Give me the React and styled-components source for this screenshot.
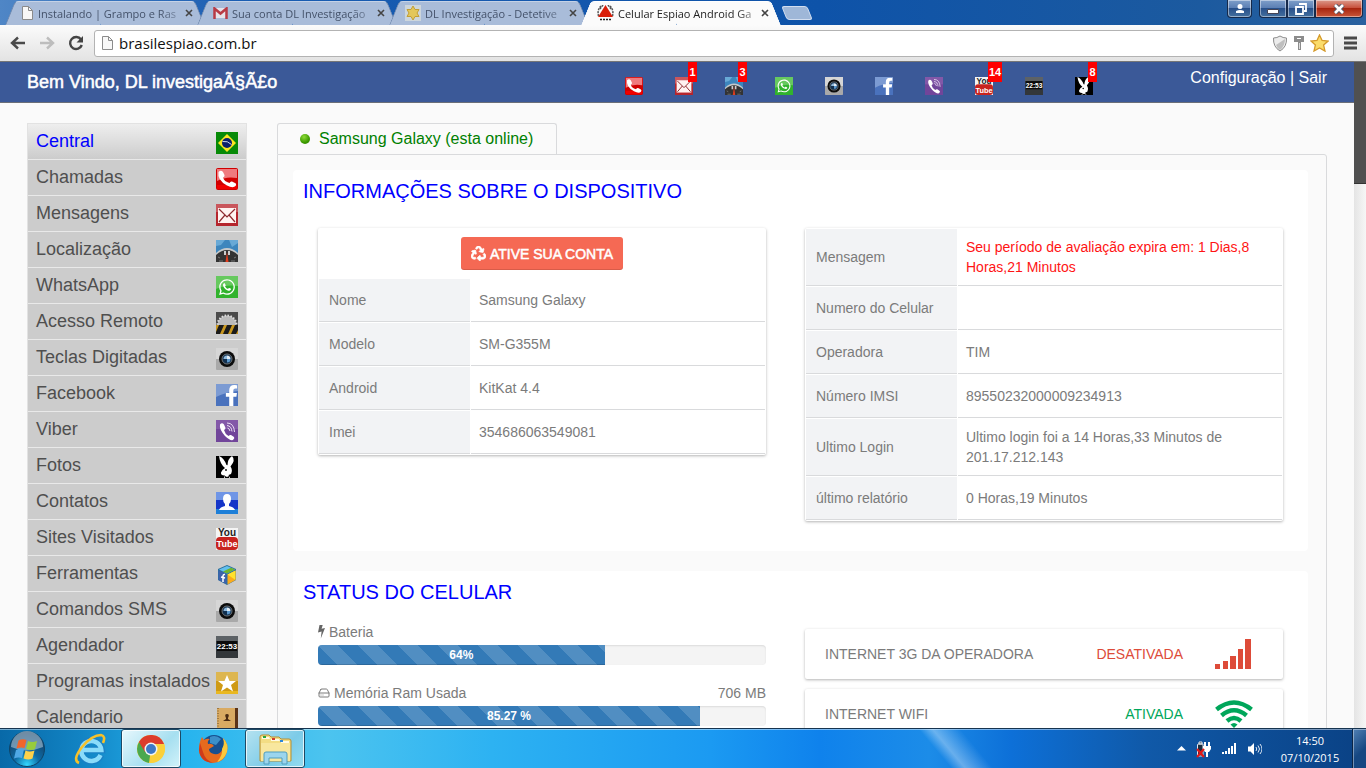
import React from "react";
import styled, {createGlobalStyle, css} from "styled-components";
import {FaRecycle, FaWhatsapp, FaFacebookF, FaPhoneAlt} from "react-icons/fa";
import {HardDrive} from "lucide-react";

const THEME = {
  page: '"Liberation Sans", Arial, sans-serif',
  system: '"Open Sans", "Noto Sans", sans-serif',
  blue: "#3b5998",
  line: "#d9dadc",
  text: "#7b7b7b",
};

const GlobalStyle = createGlobalStyle`
  *, *::before, *::after {
    box-sizing: border-box;
  }

  body {
    margin: 0;
    overflow: hidden;
    font-family: ${THEME.page};
  }

  button {
    font: inherit;
    border: 0;
    padding: 0;
    background: none;
    color: inherit;
  }

  a {
    color: inherit;
    text-decoration: none;
  }

  svg {
    display: block;
    flex: none;
  }
`;

const Screen = styled.div`
  display: flex;
  flex-direction: column;
  height: 100vh;
`;

/* ---------- browser window ---------- */

const TitleBar = styled.header`
  display: flex;
  align-items: flex-start;
  height: 25px;
  padding-left: 14px;
  background: linear-gradient(90deg, #4f86c6 0, #1a5db2 240px, #0e53a9 60%, #1c5a9f 88%, #2a619f);
  font-family: ${THEME.system};
`;

const TabShell = styled.div`
  position: relative;
  z-index: ${p => (p.$active ? 2 : 1)};
  display: flex;
  align-items: center;
  gap: 4px;
  width: 182px;
  height: 24px;
  margin: 1px 10px 0 0;
  padding: 0 3px 0 7px;
  font-size: 11px;
  color: ${p => (p.$active ? "#222" : "#44526a")};

  &::before,
  &::after {
    content: "";
    position: absolute;
    z-index: -1;
    top: 0;
    bottom: 0;
    background: ${p => (p.$active ? "#fbfbfb" : "#a9bcd9")};
    border-top: 1px solid ${p => (p.$active ? "#fff" : "#c5d2e6")};
  }

  &::before {
    left: -4px;
    right: 50%;
    border-left: 1px solid ${p => (p.$active ? "#fff" : "#6d87ad")};
    border-top-left-radius: 4px;
    transform: skewX(-22deg);
  }

  &::after {
    left: 45%;
    right: -4px;
    border-right: 1px solid ${p => (p.$active ? "#fff" : "#6d87ad")};
    border-top-right-radius: 4px;
    transform: skewX(22deg);
  }
`;

const TabTitle = styled.button`
  flex: 1;
  min-width: 0;
  overflow: hidden;
  white-space: nowrap;
  text-align: left;
  mask-image: linear-gradient(90deg, #000 85%, rgba(0, 0, 0, 0.3));
`;

const TabClose = styled.button`
  width: 8px;
  height: 16px;
  display: flex;
  align-items: center;
  justify-content: center;
`;

const NewTab = styled.button`
  width: 26px;
  height: 14px;
  margin: 6px 0 0 2px;
  background: #9fb7d8;
  border: 1px solid #d3def0;
  border-radius: 3px;
  transform: skewX(22deg);
`;

const WindowButtons = styled.div`
  display: flex;
  margin-left: auto;
  padding-right: 3px;
`;

const WindowButton = styled.button`
  display: flex;
  align-items: center;
  justify-content: center;
  width: ${p => p.$width}px;
  height: 18px;
  margin-right: ${p => (p.$apart ? 7 : 0)}px;
  border: 1px solid #15294a;
  border-top: 0;
  border-radius: ${p => p.$radius || "0"};
  box-shadow: inset 0 0 0 1px rgba(255, 255, 255, 0.45);
  background: ${p =>
    p.$close
      ? "linear-gradient(#dc9a8b, #c8523d 45%, #a8260f 50%, #c9573a)"
      : "linear-gradient(#7f9fca, #5c80b4 45%, #28508a 50%, #44709f)"};
`;

const Toolbar = styled.div`
  display: flex;
  align-items: center;
  height: 37px;
  padding: 0 8px 0 10px;
  background: linear-gradient(#fbfbfb, #e3e3e3);
  border-bottom: 1px solid #777;
`;

const ToolButton = styled.button`
  width: 16px;
  height: 16px;
  margin-right: ${p => p.$gap || 0}px;
`;

const AddressBar = styled.div`
  flex: 1;
  display: flex;
  align-items: center;
  gap: 5px;
  height: 27px;
  margin: 0 8px 0 0;
  padding: 0 4px 0 6px;
  background: #fff;
  border: 1px solid #b3b3b3;
  border-radius: 3px;
`;

const AddressInput = styled.input`
  flex: 1;
  min-width: 0;
  padding: 0;
  border: 0;
  outline: 0;
  background: none;
  font-family: ${THEME.system};
  font-size: 15px;
  color: #111;
`;

const Viewport = styled.div`
  flex: 1;
  min-height: 0;
  display: flex;
  overflow: hidden;
  background: #fafafa;
`;

const Page = styled.div`
  flex: 1;
  min-width: 0;
`;

const ScrollTrack = styled.div`
  width: 12px;
  background: linear-gradient(90deg, #e4e4e4, #f6f6f6);
`;

const ScrollThumb = styled.div`
  height: 122px;
  background: #505050;
  border-bottom: 1px solid #333;
`;

/* ---------- page ---------- */

const Container = styled.div`
  max-width: 1300px;
  margin: 0 27px;

  @media (min-width: 1367px) {
    margin: 0 auto;
  }
`;

const PageHeader = styled.header`
  background: ${THEME.blue};
  border-bottom: 1px solid #6b6f78;
  color: #fff;
`;

const HeaderInner = styled(Container)`
  display: flex;
  align-items: flex-start;
  height: 40px;
`;

const Welcome = styled.div`
  flex: 0 0 46%;
  font-size: 18px;
  line-height: 40px;
  -webkit-text-stroke: 0.5px #fff;
`;

const Shortcuts = styled.nav`
  display: flex;
  gap: 32px;
  padding-top: 15px;
`;

const Shortcut = styled.a`
  position: relative;
  width: 18px;
  height: 18px;
`;

const Badge = styled.span`
  position: absolute;
  top: -15px;
  left: 13px;
  min-width: 9px;
  padding: 0 1px;
  background: red;
  font-size: 11px;
  font-weight: bold;
  line-height: 20px;
  text-align: center;
`;

const AccountLinks = styled.div`
  margin-left: auto;
  font-size: 16px;
  line-height: 31px;
`;

const Columns = styled(Container)`
  display: flex;
  align-items: flex-start;
  gap: 30px;
  padding-top: 20px;
`;

const SideNav = styled.nav`
  width: 220px;
  flex: none;
  border: 1px solid #e2e2e2;
  border-bottom: 0;
`;

const SideLink = styled.a`
  display: flex;
  justify-content: space-between;
  height: 36px;
  padding: 0 8px;
  border-bottom: 1px solid #e9e9e9;
  background: #ccc;
  color: #4f4f4f;
  font-size: 18px;
  line-height: 34px;
  white-space: nowrap;

  svg {
    margin-top: 8px;
  }

  ${p =>
    p.$active &&
    css`
      background: linear-gradient(#eee, #ccc);
      color: #00f;
    `}
`;

const Main = styled.main`
  flex: 1;
  min-width: 0;
`;

const DeviceTab = styled.button`
  display: flex;
  align-items: center;
  gap: 9px;
  width: 280px;
  height: 31px;
  padding-left: 22px;
  border: 1px solid ${THEME.line};
  border-bottom: 0;
  border-radius: 3px 3px 0 0;
  color: #008000;
  font-size: 16px;
`;

const OnlineDot = styled.span`
  width: 10px;
  height: 10px;
  border-radius: 50%;
  background: radial-gradient(circle at 40% 30%, #8fdc38, #3c9a00 60%, #2b7a00);
`;

const Panel = styled.div`
  display: flex;
  flex-direction: column;
  gap: 20px;
  padding: 15px 18px 20px 15px;
  border: 1px solid ${THEME.line};
  border-radius: 0 3px 3px 3px;
`;

const Card = styled.section`
  padding-bottom: 30px;
  background: #fff;
  border-radius: 4px;
`;

const CardTitle = styled.h2`
  margin: 0 0 9px;
  padding: 0 10px;
  color: #00f;
  font-size: 20px;
  font-weight: normal;
  line-height: 42px;
`;

const CardGrid = styled.div`
  display: grid;
  grid-template-columns: 448fr 478fr;
  gap: 39px;
  align-items: start;
  padding: 0 25px;
  color: ${THEME.text};
  font-size: 14px;
  line-height: 20px;
`;

const Column = styled.div`
  padding-top: ${p => (p.$offset ? 7 : 0)}px;
`;

const Box = styled.div`
  background: #fff;
  border-radius: 2px;
  box-shadow: 0 1px 3px rgba(0, 0, 0, 0.3);
`;

const ActivateRow = styled.div`
  display: flex;
  justify-content: center;
  padding: 9px 0 8px;
`;

const ActivateButton = styled.button`
  display: flex;
  align-items: center;
  gap: 4px;
  height: 33px;
  padding: 0 10px;
  border-radius: 3px;
  background: #f56954;
  box-shadow: inset 0 -1px 0 rgba(0, 0, 0, 0.12);
  color: #fff;
  font-size: 14px;
  -webkit-text-stroke: 0.5px #fff;

  svg {
    stroke: #fff;
    stroke-width: 24px;
  }
`;

const Table = styled.table`
  width: 100%;
  border-collapse: separate;
  border-spacing: 1px;

  th,
  td {
    height: 43px;
    padding: 8px;
    border-bottom: 1px solid ${THEME.line};
    text-align: left;
  }

  th {
    width: 151px;
    padding-left: 10px;
    background: #f2f3f5;
    font-weight: normal;
  }
`;

const Warning = styled.span`
  color: #ff1414;
`;

const Meter = styled.div`
  margin-bottom: 18px;
`;

const MeterLabel = styled.div`
  display: flex;
  align-items: center;
  gap: 4px;
  margin-bottom: 3px;
`;

const MeterDetail = styled.span`
  margin-left: auto;
`;

const MeterTrack = styled.div`
  height: 20px;
  border-radius: 4px;
  overflow: hidden;
  background: #f4f4f4;
  box-shadow: inset 0 1px 2px rgba(0, 0, 0, 0.1);
`;

const MeterFill = styled.div`
  height: 100%;
  background-color: #337ab7;
  background-image: linear-gradient(
    45deg,
    rgba(255, 255, 255, 0.15) 25%,
    transparent 25%,
    transparent 50%,
    rgba(255, 255, 255, 0.15) 50%,
    rgba(255, 255, 255, 0.15) 75%,
    transparent 75%
  );
  background-size: 40px 40px;
  box-shadow: inset 0 -1px 0 rgba(0, 0, 0, 0.15);
  color: #fff;
  font-size: 12px;
  font-weight: bold;
  text-align: center;
`;

const StatusBox = styled(Box)`
  display: flex;
  align-items: center;
  height: 50px;
  margin-bottom: 10px;
  padding: 0 30px 0 20px;
`;

const StatusValue = styled.span`
  margin-left: auto;
  margin-right: 32px;
  color: ${p => p.$color};
`;

/* ---------- taskbar ---------- */

const Taskbar = styled.footer`
  display: flex;
  height: 40px;
  border-top: 1px solid #17344f;
  box-shadow: inset 0 1px 0 rgba(255, 255, 255, 0.45);
  background: linear-gradient(
      50deg,
      transparent 68%,
      rgba(255, 255, 255, 0.35) 69%,
      transparent 71%
    ),
    linear-gradient(
      90deg,
      #0869a8 0,
      #1284c4 6%,
      #25b3ee 13%,
      #4cc4ef 24%,
      #2db2f2 36%,
      #1b9af2 52%,
      #0f82ec 60%,
      #1c8ce8 68%,
      #0d70d8 74%,
      #1059a8 84%,
      #0a4184 100%
    );
  font-family: ${THEME.system};
  color: #fff;
`;

const TaskButton = styled.button`
  display: flex;
  align-items: center;
  justify-content: center;
  width: ${p => p.$width}px;
  height: 39px;
  margin-right: ${p => p.$gap || 0}px;

  ${p =>
    p.$open &&
    css`
      border: 1px solid #1d4a66;
      border-radius: 3px;
      box-shadow: inset 0 0 0 1px rgba(255, 255, 255, 0.75);
      background: ${p.$focused
        ? "linear-gradient(135deg, #e8f8fd, #a6dff0 60%, #d2f3fa)"
        : "linear-gradient(135deg, #b5e2f0, #7ccbe8 60%, #93dcf0)"};
    `}
`;

const Tray = styled.div`
  display: flex;
  align-items: center;
  gap: 10px;
  margin-left: auto;
`;

const Clock = styled.time`
  width: 76px;
  font-size: 11px;
  line-height: 17px;
  text-align: center;
`;

const ShowDesktop = styled.button`
  width: 14px;
  margin-left: 4px;
  border-left: 1px solid #0b2546;
  box-shadow: inset 1px 1px 0 rgba(255, 255, 255, 0.4);
  background: linear-gradient(135deg, #5180b4, #164782 60%);
`;

/* ---------- drawings ---------- */

const Phone = () => (
  <>
    <rect width="22" height="22" rx="2" fill="#d00000" />
    <path d="M1 1h20v9Q10 8 1 13z" fill="#ef7a7e" />
    <rect x="1" y="17" width="20" height="4" fill="#f00000" />
    <path
      d="M2.500 4Q5 1.500 7 4l1.500 3q.5 1.500-1.500 2.500 1 4 6.500 5.500 1-2 2.500-1.500l3 1.500q2 1 .5 3Q17 20.500 11 17.500 1 12 2.500 4z"
      fill="#fff"
    />
  </>
);

const Mail = () => (
  <>
    <rect width="22" height="22" fill="#b5252d" />
    <path d="M0 0h22v8H0z" fill="#c9565c" />
    <rect x="2" y="4" width="18" height="15" fill="#fff3f1" />
    <path d="M3 5l8 8 8-8M3 18l6-7M19 18l-6-7" fill="none" stroke="#8e2c30" strokeWidth="1.200" />
  </>
);

const Gauge = () => (
  <>
    <rect width="22" height="22" fill="#3d86bd" />
    <path d="M0 0h9l-4 5-5 1zM13 0h9v3l-6 4z" fill="#68a9d6" />
    <path d="M0 22v-9Q11 3 22 13v9z" fill="#c5c9cb" />
    <path d="M0 22v-7Q11 5 22 15v7z" fill="#333" />
    <path d="M8 11v4h2v-4zM12 11v4h2v-4z" fill="#ccc" />
    <path d="M11 12l1.500 10h-3z" fill="#e03c1c" />
    <path d="M2 17l2 1M20 17l-2 1M3 21h4M15 21h4" stroke="#777" />
  </>
);

const WhatsApp = () => (
  <>
    <rect width="22" height="22" fill="#31b32d" />
    <path d="M0 0h22v10Q10 8 0 13z" fill="#67c95f" />
    <FaWhatsapp x="2" y="2" size="18" color="#fff" />
  </>
);

const Saw = () => (
  <>
    <rect width="22" height="22" fill="#4b4b4b" />
    <circle cx="11" cy="13" r="9.500" fill="#bbb" stroke="#ddd" strokeWidth="2" strokeDasharray="1.500 1.500" />
    <path d="M0 13h22v9H0z" fill="#c9971f" />
    <path d="M3 13h5l-4 9H0v-2zM11 13h5l-4 9H7zM19 13h3v5l-2 4h-5z" fill="#1b1b1b" />
  </>
);

const Lens = () => (
  <>
    <rect width="22" height="22" rx="1" fill="#a9a9a9" />
    <path d="M0 0h22v11H0z" fill="#d6d6d6" />
    <circle cx="11" cy="11" r="8" fill="#0c0c0c" />
    <circle cx="11" cy="11" r="5" fill="#12304f" stroke="#6e7478" />
    <path d="M11 11V7.500A3.500 3.500 0 0 0 7.500 11z" fill="#8fb9dc" />
    <path d="M11 11v3.500A3.500 3.500 0 0 0 14.500 11z" fill="#5b98cd" />
    <path d="M11 11V7.500A3.500 3.500 0 0 1 14.500 11z" fill="#e4edf4" />
  </>
);

const Facebook = () => (
  <>
    <rect width="22" height="22" fill="#4a72bd" />
    <path d="M0 0h22v7Q10 8 0 13z" fill="#7c9bd3" />
    <FaFacebookF x="5" y="1" size="21" color="#fff" />
  </>
);

const Viber = () => (
  <>
    <rect width="22" height="22" fill="#71459a" />
    <path d="M0 0h22v9H0z" fill="#8358a8" />
    <path
      d="M4 4.500q2-2.500 4 0L9.500 8q0 1.500-1.500 2 1 4 4.500 6 1.500-1.500 2.500-1l3 2q1 1-1 3Q14 21 9 16 3 9 4 4.500z"
      fill="#fff"
    />
    <path d="M11 3q7 0 7.500 9M11 5.500q4.500.5 5 6M11.500 8q2 .5 2.500 3" fill="none" stroke="#e8dcf2" />
  </>
);

const Bunny = () => (
  <>
    <rect width="22" height="22" fill="#000" />
    <path
      d="M3 0Q8 2 10.500 9l1 .3Q11.500 3 16 0q4 4-1.500 10.500 2.500 3.500.500 7.500l-2.500 1 1.500 3H8l1-2.500q-4.500.2-4-3Q6 13.500 9 12 4 8 3 0z"
      fill="#fff"
    />
    <circle cx="10" cy="14" r=".9" />
    <path d="M9 20l2 1 2-1v2H9z" fill="#000" />
  </>
);

const Contact = () => (
  <>
    <rect width="22" height="22" fill="#1535c8" />
    <path d="M0 0h22v8H0z" fill="#6f95e6" />
    <path d="M0 17h22v5H0z" fill="#1d7fd8" />
    <path d="M11 2q4 0 4 5 0 3-2 5v2q5 1 6 4H3q1-3 6-4v-2q-2-2-2-5 0-5 4-5z" fill="#fff" />
  </>
);

const YouTube = () => (
  <>
    <rect width="22" height="22" fill="#f4f4f4" />
    <text x="11" y="8" textAnchor="middle" fontSize="10" fontWeight="bold" fill="#222">
      You
    </text>
    <rect x="0" y="9" width="22" height="13" rx="4" fill="#c8231e" />
    <text x="11" y="19" textAnchor="middle" fontSize="9" fontWeight="bold" fill="#fff">
      Tube
    </text>
  </>
);

const Cube = () => (
  <>
    <path d="M11 1l9 4v11l-9 5-9-5V5z" fill="#2b6f9e" />
    <path d="M11 2l8 3.500-8 4-8-4z" fill="#62c0ee" />
    <path d="M15 3.800l4 1.700-8 4-4-2z" fill="#6fb52c" />
    <path d="M2.500 6.500L10.500 10v10l-8-4z" fill="#3f62ab" />
    <path d="M11.500 10.500l8-4V16l-8 4.500z" fill="#fbab1c" />
    <path d="M11.500 10.500l8-4V16z" fill="#ffe22e" />
    <path d="M9 10.500q-2-.5-2 2V18M5 13l4 1" fill="none" stroke="#fff" strokeWidth="1.500" />
  </>
);

const FlipClock = () => (
  <>
    <rect width="22" height="22" fill="#33373a" />
    <path d="M0 0h22v5H0z" fill="#5d6266" />
    <rect x="1" y="5" width="20" height="10" fill="#0b0b0b" />
    <text x="11" y="13" textAnchor="middle" fontSize="8" fontWeight="bold" fill="#fff">
      22:53
    </text>
  </>
);

const Star = () => (
  <>
    <rect width="22" height="22" fill="#cf9a14" />
    <path d="M0 0h22v9H0z" fill="#ddb650" />
    <path d="M0 19h22v3H0z" fill="#e9b821" />
    <path d="M11 3l2.500 6H20l-5 4 2 6.500-6-4-6 4L7 13 2 9h6.500z" fill="#fff" />
  </>
);

const Book = () => (
  <>
    <rect x="1" width="21" height="22" fill="#d9aa62" />
    <path d="M19 0h3v22h-3z" fill="#5b3317" />
    <path d="M2 0v22" stroke="#6b4a22" strokeDasharray="1 1.500" />
    <path d="M11 6q3 0 1 4v1l3 2H7l3-2v-1q-2-4 1-4z" fill="#4a2b12" />
  </>
);

const Flag = () => (
  <>
    <rect width="22" height="22" fill="#078a07" />
    <path d="M11 2l9 9-9 9-9-9z" fill="#fbe621" />
    <circle cx="11" cy="11" r="5" fill="#0c1f6b" />
    <path d="M6.500 9.500q5-1 9 3" fill="none" stroke="#cfd8ee" />
  </>
);

const Glyph = ({of: Drawing, size}) => (
  <svg width={size} height={size} viewBox="0 0 22 22" aria-hidden="true">
    <Drawing />
  </svg>
);

const PageIcon = () => (
  <svg width="13" height="16" viewBox="0 0 13 16">
    <path d="M1.500 1.500h6l4 4v9h-10z" fill="#f7f7f7" stroke="#8b8b8b" />
    <path d="M7.500 1.500v4h4" fill="none" stroke="#8b8b8b" />
  </svg>
);

const GmailIcon = () => (
  <svg width="15" height="12" viewBox="0 0 15 12">
    <path d="M1 1h13v10H1z" fill="#e5e3ea" />
    <path d="M1.500 12V1.500l6 5 6-5V12" fill="none" stroke="#b83a45" strokeWidth="2.500" />
  </svg>
);

const BadgeStarIcon = () => (
  <svg width="16" height="16" viewBox="0 0 16 16">
    <path d="M0 0h16v16H0z" fill="#cdd6dc" />
    <path d="M8 1l2 3.500h4L12 8l2 3.500h-4L8 15l-2-3.500H2L4 8 2 4.500h4z" fill="#e3c75a" stroke="#c29e35" />
  </svg>
);

const SpyIcon = () => (
  <svg width="17" height="16" viewBox="0 0 17 16">
    <path
      d="M4 1Q0 5 1.500 11M13 1q4 4 2.500 10M6 0L3 4M11 0l3 4"
      fill="none"
      stroke="#555"
      strokeWidth="1.500"
      strokeDasharray="2 1"
    />
    <path d="M8.500 0l7.500 12H1z" fill="#d91f0a" />
    <path d="M3 14.500h11" stroke="#222" strokeWidth="1.500" strokeDasharray="2 1" />
  </svg>
);

const CloseIcon = () => (
  <svg width="8" height="8" viewBox="0 0 8 8">
    <path d="M1 1l6 6M7 1L1 7" stroke="#444" strokeWidth="1.600" />
  </svg>
);

const BackIcon = ({color, flip}) => (
  <svg width="16" height="16" viewBox="0 0 16 16">
    <path
      d="M15 8H2M8 2.500L2 8l6 5.500"
      transform={flip ? "rotate(180 8 8)" : undefined}
      fill="none"
      stroke={color}
      strokeWidth="2.400"
    />
  </svg>
);

const ReloadIcon = () => (
  <svg width="16" height="16" viewBox="0 0 16 16">
    <path d="M13 4.500A6 6 0 1 0 13.800 10" fill="none" stroke="#444" strokeWidth="2.400" />
    <path d="M15 1v6.500H8.500z" fill="#444" />
  </svg>
);

const ShieldIcon = () => (
  <svg width="16" height="17" viewBox="0 0 16 17">
    <path d="M8 1q3 2 6.500 2 .5 9-6.500 13Q1 12 1.500 3 5 3 8 1z" fill="#ececec" stroke="#8c8c8c" />
    <path d="M13 4q0 7-5 11-3-2-4-5z" fill="#bfbfbf" />
  </svg>
);

const KeyIcon = () => (
  <svg width="12" height="16" viewBox="0 0 12 16">
    <path d="M1 1h10v6H8v8H5V7H1z" fill="#8c8c8c" />
    <path d="M4 3h4v1H4z" fill="#fff" />
    <path d="M6.500 8v6" stroke="#ddd" />
  </svg>
);

const BookmarkIcon = () => (
  <svg width="19" height="18" viewBox="0 0 19 18">
    <path
      d="M9.500 1l2.600 5.500 6 .6-4.500 4 1.400 6-5.500-3.200L4 17l1.400-6L1 7.100l6-.6z"
      fill="#fbdc6a"
      stroke="#d59a2b"
      strokeWidth="1.300"
    />
  </svg>
);

const MenuIcon = () => (
  <svg width="16" height="16" viewBox="0 0 16 16">
    <path d="M2 3h13M2 8h13M2 13h13" stroke="#4a4a4a" strokeWidth="2.800" />
  </svg>
);

const BoltIcon = () => (
  <svg width="7" height="14" viewBox="0 0 7 14">
    <path d="M1.500 0h3.200L3.600 3.800 7 3 2.800 13.500 3.600 6.600 0 7.500z" fill="#666" />
  </svg>
);

const SignalIcon = ({color}) => (
  <svg width="38" height="32" viewBox="0 0 38 32">
    <path d="M0 26h5v5H0zM8 23h5v8H8zM15 18h6v13h-6zM23 11h5v20h-5zM30 1h6v30h-6z" fill={color} />
  </svg>
);

const WifiIcon = ({color}) => (
  <svg width="38" height="28" viewBox="0 0 38 28">
    <g fill="none" stroke={color} strokeWidth="4.500">
      <path d="M1.500 9.500Q19-4.500 36.500 9.500" />
      <path d="M6.500 15.500Q19 5 31.500 15.500" />
      <path d="M12 21Q19 15 26 21" />
    </g>
    <path d="M15.500 24.500q3.500-3 7 0L19 28z" fill={color} />
  </svg>
);

const StartOrb = () => (
  <svg width="38" height="38" viewBox="0 0 38 38">
    <defs>
      <radialGradient id="orb" cx=".5" cy=".95" r=".9">
        <stop offset="0" stopColor="#35d8ff" />
        <stop offset=".4" stopColor="#0d6ba5" />
        <stop offset="1" stopColor="#173a5e" />
      </radialGradient>
    </defs>
    <circle cx="19" cy="19" r="17.500" fill="url(#orb)" stroke="#0e4468" />
    <path d="M3 17A16 16 0 0 1 35 17Q19 24 3 17z" fill="#b9cfdf" opacity=".55" />
    <path d="M10.500 10.500q4-2 8-.5L16.500 18q-4-1-8 .5z" fill="#f0652b" />
    <path d="M20 11q4 2 9 0l-2 8q-4 2-9 0z" fill="#97cc3c" />
    <path d="M8 20q4-2 8-.5L14 28q-4-1-8 .5z" fill="#4fa8e5" />
    <path d="M17.500 20.500q4 2 9 0l-2 8q-4 2-9 0z" fill="#fdd14a" />
  </svg>
);

const ExplorerE = () => (
  <svg width="32" height="34" viewBox="0 0 32 34">
    <path d="M27 23a10.500 10.500 0 1 1 .8-5H8" fill="none" stroke="#1b80c5" strokeWidth="6.500" />
    <path d="M26.500 23a10 10 0 1 1 .8-5H9" fill="none" stroke="#8adcfa" strokeWidth="4.500" />
    <path d="M5 31q-7-3 3-16Q18 3 27 3q5 1 2 8" fill="none" stroke="#f6c12a" strokeWidth="2.600" />
  </svg>
);

const ChromeIcon = () => (
  <svg width="30" height="30" viewBox="0 0 30 30">
    <circle cx="15" cy="15" r="14" fill="#fbd03a" />
    <path d="M15 15L3 8a14 14 0 0 0 10 20.900z" fill="#4aa84e" />
    <path d="M2.900 8a14 14 0 0 1 25.200 2H15l-6 8z" fill="#dc3c2c" />
    <path d="M15 10h13q3 8-4 15-4 4-11 4l6.500-11z" fill="#fbd03a" />
    <circle cx="15" cy="15" r="6.500" fill="#f3f3f3" />
    <circle cx="15" cy="15" r="5" fill="#3d78c6" />
  </svg>
);

const FirefoxIcon = () => (
  <svg width="32" height="32" viewBox="0 0 32 32">
    <circle cx="17" cy="15" r="13" fill="#174f8f" />
    <path d="M13 4q6-3 11 2l-5 6-6-2z" fill="#3b8fc9" />
    <path
      d="M26 5q6 6 4 14-3 11-14 11Q3 29 2 17 2 9 5 4l2 3q3-2 6-1-3 2-2 5 4-1 6 2l-5 3q0 4 5 5 6 1 8-4 4-5 1-12z"
      fill="#e66a1e"
    />
    <path d="M26 5q6 6 4 14-3 8-10 10 6-7 5-13 3-5 1-11z" fill="#fbc93c" />
    <path d="M2 17q1 12 14 13-8-3-10-11L3 10z" fill="#cf3b1b" />
  </svg>
);

const FolderIcon = () => (
  <svg width="34" height="32" viewBox="0 0 34 32">
    <path d="M2 4q0-2 2-2h7l2 2h8l2 2h8q2 0 2 2v20H2z" fill="#f3dd84" stroke="#b58f35" />
    <path d="M4 4h7l1 2H4zM13 6h8l1 2h-9zM23 8h8v2h-8z" fill="#fffbe5" />
    <path d="M5 3h3v2H5z" fill="#29a63c" />
    <path d="M14 5h3v2h-3z" fill="#d33a2c" />
    <path d="M22 7h3v2h-3z" fill="#2c86d8" />
    <path d="M3 10h29v18H3z" fill="#f8e79f" />
    <path d="M6 31V21q0-2 2-2h19q2 0 2 2v10h-5v-6H11v6z" fill="#9bd5ee" stroke="#4e9dbf" />
  </svg>
);

const BatteryIcon = () => (
  <svg width="15" height="18" viewBox="0 0 15 18">
    <path d="M2 4h5v12H1.500V5zM3 2h3v2H3z" fill="#1b2c40" stroke="#dfe6ee" />
    <path d="M7 6h8v3l-2 3h-1v5h-2v-5H9L7 9zM8 2h2v4H8zM12 2h2v4h-2z" fill="#fff" />
    <path d="M1 9l7 8M8 9l-7 8" stroke="#e01818" strokeWidth="2.200" />
  </svg>
);

const TraySignal = () => (
  <svg width="16" height="14" viewBox="0 0 16 14">
    <path d="M1 10h2v2H1zM4 9h2v3H4zM7 6h2v6H7zM10 4h2v8h-2zM13 1h2v11h-2z" fill="#fff" />
  </svg>
);

const VolumeIcon = () => (
  <svg width="15" height="14" viewBox="0 0 15 14">
    <path d="M1 4.500h2.500L7 1v12L3.500 9.500H1z" fill="#fff" />
    <path d="M9 5q1.500 2 0 4M11 3.500q3 3.500 0 7M13 2q4 5 0 10" fill="none" stroke="#dfe9f5" />
  </svg>
);

/* ---------- data ---------- */

const TABS = [
  {title: "Instalando | Grampo e Ras", icon: PageIcon},
  {title: "Sua conta DL Investigação", icon: GmailIcon},
  {title: "DL Investigação - Detetive", icon: BadgeStarIcon},
  {title: "Celular Espiao Android Ga", icon: SpyIcon, active: true},
];

const SHORTCUTS = [
  {label: "Chamadas", icon: Phone},
  {label: "Mensagens", icon: Mail, count: 1},
  {label: "Localização", icon: Gauge, count: 3},
  {label: "WhatsApp", icon: WhatsApp},
  {label: "Teclas Digitadas", icon: Lens},
  {label: "Facebook", icon: Facebook},
  {label: "Viber", icon: Viber},
  {label: "Sites Visitados", icon: YouTube, count: 14},
  {label: "Agendador", icon: FlipClock},
  {label: "Fotos", icon: Bunny, count: 8},
];

const MENU = [
  ["Central", Flag],
  ["Chamadas", Phone],
  ["Mensagens", Mail],
  ["Localização", Gauge],
  ["WhatsApp", WhatsApp],
  ["Acesso Remoto", Saw],
  ["Teclas Digitadas", Lens],
  ["Facebook", Facebook],
  ["Viber", Viber],
  ["Fotos", Bunny],
  ["Contatos", Contact],
  ["Sites Visitados", YouTube],
  ["Ferramentas", Cube],
  ["Comandos SMS", Lens],
  ["Agendador", FlipClock],
  ["Programas instalados", Star],
  ["Calendario", Book],
];

const DEVICE = [
  ["Nome", "Samsung Galaxy"],
  ["Modelo", "SM-G355M"],
  ["Android", "KitKat 4.4"],
  ["Imei", "354686063549081"],
];

const ACCOUNT = [
  ["Mensagem", <Warning>Seu período de avaliação expira em: 1 Dias,8 Horas,21 Minutos</Warning>],
  ["Numero do Celular", ""],
  ["Operadora", "TIM"],
  ["Número IMSI", "89550232000009234913"],
  ["Ultimo Login", "Ultimo login foi a 14 Horas,33 Minutos de 201.17.212.143"],
  ["último relatório", "0 Horas,19 Minutos"],
];

/* ---------- components ---------- */

const BrowserTabs = () => (
  <TitleBar>
    {TABS.map(({title, icon: Icon, active}) => (
      <TabShell key={title} $active={active}>
        <Icon />
        <TabTitle>{title}</TabTitle>
        <TabClose aria-label="Fechar guia">
          <CloseIcon />
        </TabClose>
      </TabShell>
    ))}
    <NewTab aria-label="Nova guia" />
    <WindowButtons>
      <WindowButton $width={25} $apart $radius="0 0 4px 4px" aria-label="Usuário">
        <svg width="10" height="10" viewBox="0 0 10 10">
          <path d="M5 0a2 2 0 0 1 0 5 2 2 0 0 1 0-5zM1 9V7q4-2 8 0v2z" fill="#fff" />
        </svg>
      </WindowButton>
      <WindowButton $width={28} $radius="0 0 0 4px" aria-label="Minimizar">
        <svg width="12" height="10" viewBox="0 0 12 10">
          <path d="M.5 5.500h11v4H.5z" fill="#fff" stroke="#445" />
        </svg>
      </WindowButton>
      <WindowButton $width={28} aria-label="Restaurar">
        <svg width="12" height="12" viewBox="0 0 12 12">
          <path d="M4 1h7v7H9M1 4h7v7H1z" fill="none" stroke="#fff" strokeWidth="1.800" />
        </svg>
      </WindowButton>
      <WindowButton $width={48} $close $radius="0 0 4px 0" aria-label="Fechar">
        <svg width="12" height="10" viewBox="0 0 12 10">
          <path d="M2 1l8 8M10 1L2 9" stroke="#535666" strokeWidth="4.500" />
          <path d="M2 1l8 8M10 1L2 9" stroke="#fff" strokeWidth="2.600" />
        </svg>
      </WindowButton>
    </WindowButtons>
  </TitleBar>
);

const BrowserToolbar = () => (
  <Toolbar>
    <ToolButton $gap={13} aria-label="Voltar">
      <BackIcon color="#4a4a4a" />
    </ToolButton>
    <ToolButton $gap={13} aria-label="Avançar">
      <BackIcon color="#bdbdbd" flip />
    </ToolButton>
    <ToolButton $gap={10} aria-label="Recarregar">
      <ReloadIcon />
    </ToolButton>
    <AddressBar>
      <PageIcon />
      <AddressInput aria-label="Endereço" defaultValue="brasilespiao.com.br" />
      <ShieldIcon />
      <KeyIcon />
      <BookmarkIcon />
    </AddressBar>
    <ToolButton aria-label="Menu">
      <MenuIcon />
    </ToolButton>
  </Toolbar>
);

const InfoTable = ({rows}) => (
  <Table>
    <tbody>
      {rows.map(([label, value]) => (
        <tr key={label}>
          <th scope="row">{label}</th>
          <td>{value}</td>
        </tr>
      ))}
    </tbody>
  </Table>
);

const Progress = ({icon, label, value, detail, percent}) => (
  <Meter>
    <MeterLabel>
      {icon}
      <span>{label}</span>
      {detail && <MeterDetail>{detail}</MeterDetail>}
    </MeterLabel>
    <MeterTrack>
      <MeterFill style={{width: `${percent}%`}}>{value}</MeterFill>
    </MeterTrack>
  </Meter>
);

const Connection = ({name, state, color, icon: Icon}) => (
  <StatusBox>
    <span>{name}</span>
    <StatusValue $color={color}>{state}</StatusValue>
    <Icon color={color} />
  </StatusBox>
);

const Dashboard = () => (
  <Page>
    <PageHeader>
      <HeaderInner>
        <Welcome>Bem Vindo, DL investigaÃ§Ã£o</Welcome>
        <Shortcuts aria-label="Atalhos">
          {SHORTCUTS.map(({label, icon, count}) => (
            <Shortcut href="#" key={label} aria-label={label}>
              <Glyph of={icon} size={18} />
              {count && <Badge>{count}</Badge>}
            </Shortcut>
          ))}
        </Shortcuts>
        <AccountLinks>
          <a href="#">Configuração</a> | <a href="#">Sair</a>
        </AccountLinks>
      </HeaderInner>
    </PageHeader>
    <Columns>
      <SideNav>
        {MENU.map(([label, icon], i) => (
          <SideLink href="#" key={label} $active={i === 0}>
            {label}
            <Glyph of={icon} size={22} />
          </SideLink>
        ))}
      </SideNav>
      <Main>
        <DeviceTab>
          <OnlineDot />
          Samsung Galaxy (esta online)
        </DeviceTab>
        <Panel>
          <Card>
            <CardTitle>INFORMAÇÕES SOBRE O DISPOSITIVO</CardTitle>
            <CardGrid>
              <Column $offset>
                <Box>
                  <ActivateRow>
                    <ActivateButton>
                      <FaRecycle size={15} />
                      ATIVE SUA CONTA
                    </ActivateButton>
                  </ActivateRow>
                  <InfoTable rows={DEVICE} />
                </Box>
              </Column>
              <Column $offset>
                <Box>
                  <InfoTable rows={ACCOUNT} />
                </Box>
              </Column>
            </CardGrid>
          </Card>
          <Card>
            <CardTitle>STATUS DO CELULAR</CardTitle>
            <CardGrid>
              <Column>
                <Progress icon={<BoltIcon />} label="Bateria" value="64%" percent={64} />
                <Progress
                  icon={<HardDrive size={12} />}
                  label="Memória Ram Usada"
                  detail="706 MB"
                  value="85.27 %"
                  percent={85.27}
                />
              </Column>
              <Column $offset>
                <Connection name="INTERNET 3G DA OPERADORA" state="DESATIVADA" color="#dd4b39" icon={SignalIcon} />
                <Connection name="INTERNET WIFI" state="ATIVADA" color="#00a65a" icon={WifiIcon} />
              </Column>
            </CardGrid>
          </Card>
        </Panel>
      </Main>
    </Columns>
  </Page>
);

const SystemTaskbar = () => (
  <Taskbar>
    <TaskButton $width={54} $gap={8} aria-label="Iniciar">
      <StartOrb />
    </TaskButton>
    <TaskButton $width={56} $gap={3} aria-label="Internet Explorer">
      <ExplorerE />
    </TaskButton>
    <TaskButton $width={60} $gap={2} $open $focused aria-label="Google Chrome">
      <ChromeIcon />
    </TaskButton>
    <TaskButton $width={60} $gap={2} aria-label="Firefox">
      <FirefoxIcon />
    </TaskButton>
    <TaskButton $width={60} $open aria-label="Windows Explorer">
      <FolderIcon />
    </TaskButton>
    <Tray>
      <svg width="9" height="5" viewBox="0 0 9 5">
        <path d="M4.500 0L9 4.500H0z" fill="#fff" />
      </svg>
      <BatteryIcon />
      <TraySignal />
      <VolumeIcon />
      <Clock>
        14:50
        <br />
        07/10/2015
      </Clock>
    </Tray>
    <ShowDesktop aria-label="Mostrar área de trabalho" />
  </Taskbar>
);

const App = () => (
  <Screen>
    <GlobalStyle />
    <BrowserTabs />
    <BrowserToolbar />
    <Viewport>
      <Dashboard />
      <ScrollTrack>
        <ScrollThumb />
      </ScrollTrack>
    </Viewport>
    <SystemTaskbar />
  </Screen>
);

export default App;
